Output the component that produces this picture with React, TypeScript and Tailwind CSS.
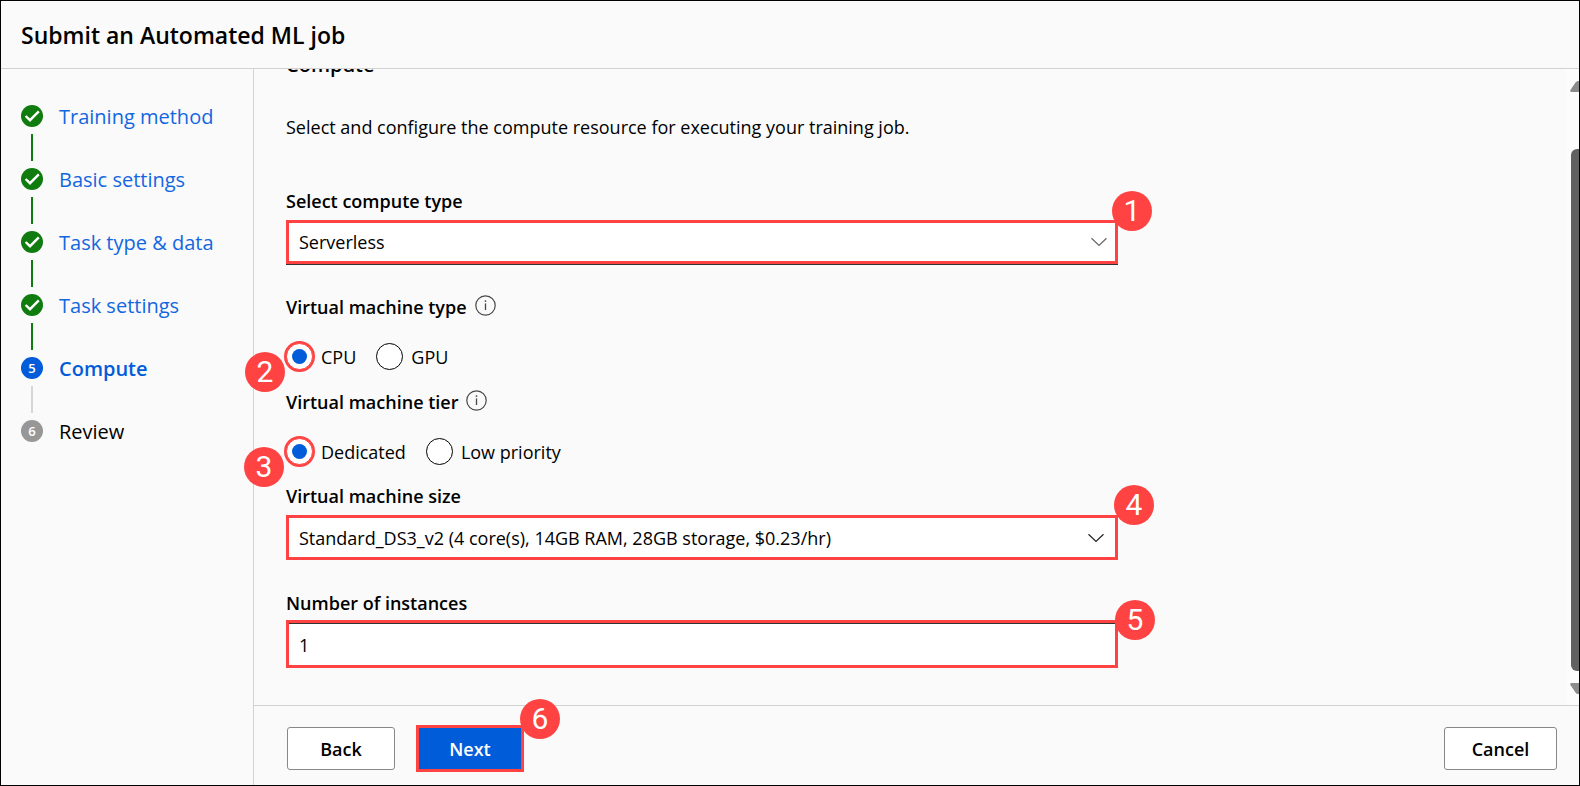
import React, { useState } from "react";
import type { ReactNode } from "react";

const doneSteps = ["Training method", "Basic settings", "Task type & data", "Task settings"];

function Badge({ n, className }: { n: number; className: string }) {
  return (
    <span
      className={`absolute z-10 flex size-10 items-center justify-center rounded-full bg-[#ff4343] font-[Roboto,'Liberation_Sans',sans-serif] text-[30px] leading-10 text-white ${className}`}
    >
      {n}
    </span>
  );
}

function CheckIcon() {
  return (
    <svg viewBox="0 0 22 22" className="size-[22px] shrink-0" aria-hidden="true">
      <circle cx="11" cy="11" r="11" fill="#107c10" />
      <path d="M4.6 11 9 15.200 17.800 6.400" fill="none" stroke="#fff" strokeWidth="2.4" />
    </svg>
  );
}

function InfoIcon() {
  return (
    <svg viewBox="0 0 21 21" className="mb-1 size-[21px] shrink-0" aria-hidden="true">
      <circle cx="10.5" cy="10.5" r="9.7" fill="none" stroke="#484848" strokeWidth="1.2" />
      <path d="M10.5 8.4V15" stroke="#484848" strokeWidth="1.3" />
      <circle cx="10.5" cy="6.1" r="0.9" fill="#484848" />
    </svg>
  );
}

function Chevron({ className }: { className: string }) {
  return (
    <svg
      viewBox="0 0 16 9"
      className={`pointer-events-none absolute top-1/2 h-[9px] w-4 -translate-y-1/2 ${className}`}
      fill="none"
      stroke="currentColor"
      strokeWidth="1.2"
      aria-hidden="true"
    >
      <path d="M0.5 0.7 8 8 15.5 0.7" />
    </svg>
  );
}

function Step({ icon, line, children }: { icon: ReactNode; line?: string; children: ReactNode }) {
  return (
    <li className="flex gap-4">
      <div className="flex flex-col items-center gap-[7px] pb-[7px]">
        {icon}
        {line && <span className={`h-[27px] w-0.5 ${line}`} />}
      </div>
      <div className="text-[20px] leading-6 whitespace-nowrap">{children}</div>
    </li>
  );
}

function StepNumber({ n, className }: { n: number; className: string }) {
  return (
    <span
      className={`flex size-[22px] items-center justify-center rounded-full text-[13px] leading-[22px] font-semibold text-white ${className}`}
    >
      {n}
    </span>
  );
}

function RadioGroup({
  legend,
  name,
  options,
  badge,
}: {
  legend: string;
  name: string;
  options: string[];
  badge: ReactNode;
}) {
  const [value, setValue] = useState(options[0]);
  return (
    <fieldset>
      <legend className="flex h-7 items-center gap-2 font-semibold">
        {legend}
        <InfoIcon />
      </legend>
      <div className="relative mt-[22px] flex h-[27px] items-center gap-5">
        {badge}
        {options.map((o) => (
          <label key={o} className="flex items-center gap-2">
            <input
              type="radio"
              name={name}
              checked={value === o}
              onChange={() => setValue(o)}
              className="grid size-[27px] appearance-none place-content-center rounded-full border border-black bg-white checked:border-[#ff4343] checked:shadow-[0_0_0_2px_#ff4343] checked:before:size-[15px] checked:before:rounded-full checked:before:bg-[#015cda] checked:before:content-['']"
            />
            {o}
          </label>
        ))}
      </div>
    </fieldset>
  );
}

const button = "h-[43px] rounded-[3px] border border-[#8a8886] bg-white font-semibold";

export default function App() {
  return (
    <div className="flex h-screen flex-col overflow-hidden border border-black bg-[#fafafa] font-['Open_Sans','Noto_Sans',sans-serif] text-[18px] leading-7 text-black">
      <header className="flex h-[68px] shrink-0 items-center border-b border-[#d2d2d2] px-5">
        <h1 className="text-[23px] leading-8 font-semibold">Submit an Automated ML job</h1>
      </header>
      <div className="flex min-h-0 flex-1">
        <nav className="w-[253px] shrink-0 border-r border-[#d2d2d2] px-5 pt-9">
          <ol>
            {doneSteps.map((s) => (
              <Step key={s} icon={<CheckIcon />} line="bg-[#107c10]">
                <a href="#" className="text-[#1267e0]">
                  {s}
                </a>
              </Step>
            ))}
            <Step icon={<StepNumber n={5} className="bg-[#015cda]" />} line="bg-[#d6d6d6]">
              <a href="#" aria-current="step" className="font-semibold text-[#015cda]">
                Compute
              </a>
            </Step>
            <Step icon={<StepNumber n={6} className="bg-[#979797]" />}>Review</Step>
          </ol>
        </nav>
        <div className="flex min-w-0 flex-1 flex-col">
          <div className="flex min-h-0 flex-1">
            <main className="flex min-w-0 flex-1 flex-col justify-end overflow-x-visible overflow-y-clip pb-[37px] pl-8">
              <h2 className="text-[20px] font-semibold">Compute</h2>
              <p className="mt-[34px]">
                Select and configure the compute resource for executing your training job.
              </p>
              <form className="mt-[46px] w-full max-w-[832px]">
                <div className="flex flex-col gap-[5px]">
                  <label htmlFor="compute-type" className="font-semibold">
                    Select compute type
                  </label>
                  <div className="relative">
                    <select
                      id="compute-type"
                      className="h-11 w-full appearance-none border-[3px] border-[#ff4343] bg-white px-[10px] shadow-[0_1px_0_#333]"
                    >
                      <option>Serverless</option>
                    </select>
                    <Chevron className="right-[11px] text-[#666]" />
                    <Badge n={1} className="-top-[29px] -right-[34px]" />
                  </div>
                </div>
                <div className="mt-[29px]">
                  <RadioGroup
                    legend="Virtual machine type"
                    name="vm-type"
                    options={["CPU", "GPU"]}
                    badge={<Badge n={2} className="top-[9px] -left-[41px]" />}
                  />
                </div>
                <div className="mt-[18px]">
                  <RadioGroup
                    legend="Virtual machine tier"
                    name="vm-tier"
                    options={["Dedicated", "Low priority"]}
                    badge={<Badge n={3} className="top-[9px] -left-[42px]" />}
                  />
                </div>
                <div className="mt-[17px] flex flex-col gap-[5px]">
                  <label htmlFor="vm-size" className="font-semibold">
                    Virtual machine size
                  </label>
                  <div className="relative">
                    <select
                      id="vm-size"
                      className="h-[45px] w-full appearance-none border-[3px] border-[#ff4343] bg-white px-[10px]"
                    >
                      <option>Standard_DS3_v2 (4 core(s), 14GB RAM, 28GB storage, $0.23/hr)</option>
                    </select>
                    <Chevron className="right-[14px] text-[#222]" />
                    <Badge n={4} className="-top-[30px] -right-[36px]" />
                  </div>
                </div>
                <div className="mt-[29px] flex flex-col gap-[3px]">
                  <label htmlFor="instances" className="font-semibold">
                    Number of instances
                  </label>
                  <div className="relative">
                    <input
                      id="instances"
                      type="text"
                      inputMode="numeric"
                      defaultValue="1"
                      className="h-12 w-full border-[3px] border-[#ff4343] bg-white px-[10px] pt-0.5 shadow-[inset_0_1px_0_#333]"
                    />
                    <Badge n={5} className="-top-5 -right-[37px]" />
                  </div>
                </div>
              </form>
            </main>
            <div
              className="flex w-[13px] shrink-0 flex-col items-end overflow-hidden bg-[#fcfcfc] pt-3 pb-[11px]"
              aria-hidden="true"
            >
              <svg viewBox="0 0 9 11" className="h-[11px] w-[9px] shrink-0">
                <path d="M9 0H8Q6.500 0 5.500 1.500L0.400 9Q-0.300 11 1.500 11H9Z" fill="#8b8b8b" />
              </svg>
              <div className="mt-[57px] mb-3 w-2 flex-1 rounded-l-[6px] bg-[#616161]" />
              <svg viewBox="0 0 9 11" className="h-[11px] w-[9px] shrink-0">
                <path d="M9 11H8Q6.500 11 5.500 9.500L0.400 2Q-0.300 0 1.500 0H9Z" fill="#8b8b8b" />
              </svg>
            </div>
          </div>
          <footer className="flex h-20 shrink-0 items-center justify-between border-t border-[#d2d2d2] pt-1.5 pr-[22px] pl-[33px]">
            <div className="flex items-center gap-[21px]">
              <button type="button" className={`${button} w-[108px]`}>
                Back
              </button>
              <div className="relative">
                <button
                  type="button"
                  className="block h-[47px] w-[108px] border-[3px] border-[#ff4343] bg-[#015cda] font-semibold text-white"
                >
                  Next
                </button>
                <Badge n={6} className="-top-[26px] -right-9" />
              </div>
            </div>
            <button type="button" className={`${button} w-[113px]`}>
              Cancel
            </button>
          </footer>
        </div>
      </div>
    </div>
  );
}
